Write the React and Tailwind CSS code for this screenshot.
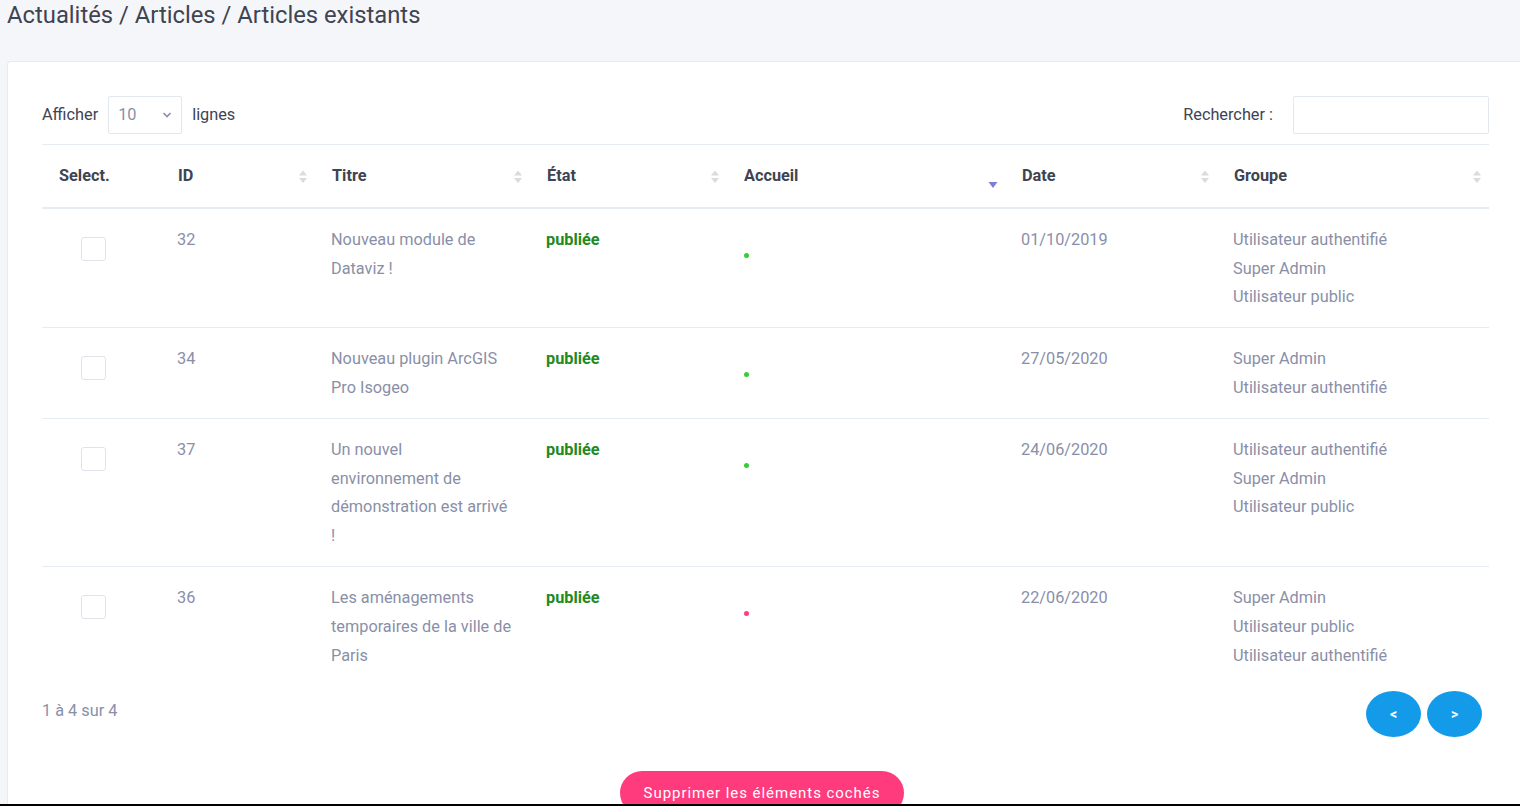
import React from 'react';

const rows = [
  {
    id: 32,
    title: 'Nouveau module de Dataviz !',
    date: '01/10/2019',
    home: true,
    groups: ['Utilisateur authentifié', 'Super Admin', 'Utilisateur public'],
  },
  {
    id: 34,
    title: 'Nouveau plugin ArcGIS Pro Isogeo',
    date: '27/05/2020',
    home: true,
    groups: ['Super Admin', 'Utilisateur authentifié'],
  },
  {
    id: 37,
    title: 'Un nouvel environnement de démonstration est arrivé !',
    date: '24/06/2020',
    home: true,
    groups: ['Utilisateur authentifié', 'Super Admin', 'Utilisateur public'],
  },
  {
    id: 36,
    title: 'Les aménagements temporaires de la ville de Paris',
    date: '22/06/2020',
    home: false,
    groups: ['Super Admin', 'Utilisateur public', 'Utilisateur authentifié'],
  },
];

// DataTables-like sort arrows
const SortIcon = ({ active }) =>
  active ? (
    <svg width="10" height="14" viewBox="0 0 10 14" className="absolute right-[7px] top-[34px]">
      <path d="M0.5 3 L9.5 3 L5 9 Z" fill="#7b7fd6" />
    </svg>
  ) : (
    <svg width="10" height="14" viewBox="0 0 10 14" className="absolute right-[7px] top-[25px]">
      <path d="M5 0.5 L9 5.5 L1 5.5 Z" fill="#d9dbe1" />
      <path d="M1 8 L9 8 L5 13 Z" fill="#d9dbe1" />
    </svg>
  );

const headers = [
  { label: 'Select.', sort: false },
  { label: 'ID', sort: true },
  { label: 'Titre', sort: true },
  { label: 'État', sort: true },
  { label: 'Accueil', sort: true, active: true },
  { label: 'Date', sort: true },
  { label: 'Groupe', sort: true },
];

export default function App() {
  return (
    <div
      className="min-h-[806px] bg-[#f5f6fa] pl-[7px] text-[16.3px]"
      style={{ fontFamily: 'Roboto, "Liberation Sans", sans-serif' }}
    >
      <h1 className="h-[30px] text-[23.8px] leading-[30px] text-[#3e4452] font-normal">
        Actualités / Articles / Articles existants
      </h1>

      <div className="mt-[31px] bg-white border-t border-l border-[#e6eaf2] rounded-tl-[4px] pl-[34px] pr-[31px] pt-[34px] pb-10">
        {/* top controls */}
        <div className="flex items-center justify-between h-[38px]">
          <div className="flex items-center gap-[10px] text-[#3e4452]">
            <span>Afficher</span>
            <div className="flex items-center justify-between w-[74px] h-[38px] border border-[#e3e7ef] rounded-[2px] pl-[9px] pr-[9px] text-[#8a8fa8]">
              <span>10</span>
              <svg width="10" height="6" viewBox="0 0 10 6">
                <path d="M1.5 1 L5 4.5 L8.5 1" stroke="#8a8fa8" strokeWidth="1.6" fill="none" />
              </svg>
            </div>
            <span>lignes</span>
          </div>
          <div className="flex items-center gap-[20px] text-[#3e4452]">
            <span>Rechercher :</span>
            <div className="w-[196px] h-[38px] border border-[#e3e7ef] rounded-[2px]" />
          </div>
        </div>

        {/* table */}
        <table className="mt-[10px] w-[1447px] table-fixed border-collapse border-t border-[#e6eaf2]">
          <colgroup>
            <col className="w-[119px]" />
            <col className="w-[154px]" />
            <col className="w-[215px]" />
            <col className="w-[197px]" />
            <col className="w-[278px]" />
            <col className="w-[212px]" />
            <col className="w-[272px]" />
          </colgroup>
          <thead>
            <tr className="border-b-2 border-[#e6eaf2]">
              {headers.map((h) => (
                <th
                  key={h.label}
                  className="relative text-left font-bold text-[#3e4452] pt-[17px] pb-4 pl-[17px] pr-6 leading-[28.8px] align-top"
                >
                  {h.label}
                  {h.sort && <SortIcon active={h.active} />}
                </th>
              ))}
            </tr>
          </thead>
          <tbody>
            {rows.map((r, i) => (
              <tr key={r.id} className={i > 0 ? 'border-t border-[#e6eaf2]' : ''}>
                <td className="align-top pt-[17px] pb-[15px] pl-[39px]">
                  <div className="mt-[11px] w-[25px] h-[24px] border border-[#dfe4ec] rounded-[3px]" />
                </td>
                <td className="align-top pt-[17px] pb-[15px] pl-4 leading-[28.8px] text-[#8a8fa8]">{r.id}</td>
                <td className="align-top pt-[17px] pb-[15px] pl-4 pr-[18px] leading-[28.8px] text-[#8a8fa8]">
                  {r.title}
                </td>
                <td className="align-top pt-[17px] pb-[15px] pl-4 leading-[28.8px] font-bold text-[#1f8a1f]">
                  publiée
                </td>
                <td className="align-top pt-[17px] pb-[15px] pl-[17px]">
                  <div
                    className={`mt-[27px] w-[5px] h-[5px] rounded-full ${
                      r.home ? 'bg-[#38cc38]' : 'bg-[#ff3d7f]'
                    }`}
                  />
                </td>
                <td className="align-top pt-[17px] pb-[15px] pl-4 leading-[28.8px] text-[#8a8fa8]">{r.date}</td>
                <td className="align-top pt-[17px] pb-[15px] pl-4 leading-[28.8px] text-[#8a8fa8]">
                  {r.groups.map((g) => (
                    <div key={g}>{g}</div>
                  ))}
                </td>
              </tr>
            ))}
          </tbody>
        </table>

        {/* footer */}
        <div className="mt-[6px] flex items-start justify-between w-[1447px]">
          <div className="pt-[8px] text-[#8a8fa8] leading-[24px]">1 à 4 sur 4</div>
          <div className="flex gap-[6px] pr-[7px]">
            <button className="w-[55px] h-[46px] rounded-[50%] bg-[#139bea] text-white text-[14px] font-bold">
              &lt;
            </button>
            <button className="w-[55px] h-[46px] rounded-[50%] bg-[#139bea] text-white text-[14px] font-bold">
              &gt;
            </button>
          </div>
        </div>

        <div className="mt-[34px] flex justify-center w-[1447px]">
          <button className="-ml-[7px] h-[44px] px-[24px] rounded-full bg-[#ff3b7e] text-white text-[15px] font-normal tracking-[0.95px]">
            Supprimer les éléments cochés
          </button>
        </div>
      </div>

      <div className="fixed bottom-0 left-0 right-0 h-[2px] bg-black" />
    </div>
  );
}
